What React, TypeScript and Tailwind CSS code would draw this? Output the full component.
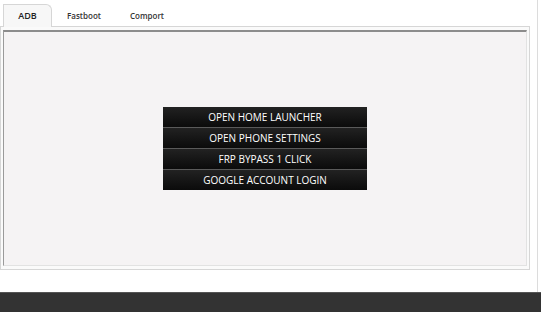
const actions = ["OPEN HOME LAUNCHER", "OPEN PHONE SETTINGS", "FRP BYPASS 1 CLICK", "GOOGLE ACCOUNT LOGIN"];

function ActionButton({ label }: { label: string }) {
  return (
    <button className="h-[20px] w-full bg-gradient-to-b from-[#222] to-[#0b0b0b] text-[10px] leading-[20px] text-white">
      {label}
    </button>
  );
}

export default function App() {
  return (
    <div className="w-[541px] h-[312px] bg-white flex flex-col overflow-hidden [font-family:'Open_Sans','Liberation_Sans',sans-serif]">
      <div className="h-[292px] flex">
        {/* Main tab control */}
        <div className="w-[530px] flex flex-col">
          {/* Tabs */}
          <div className="h-[26px] flex items-end pl-[3px] text-[8px] font-semibold text-[#333]">
            <div className="h-[23px] w-[49px] bg-[#f7f7f7] border border-b-0 border-[#d6d6d6] rounded-tr-[6px] flex items-center justify-center text-[9px] text-[#222] relative top-[1px]">
              ADB
            </div>
            <div className="h-[20px] w-[64px] flex items-center justify-center">Fastboot</div>
            <div className="h-[20px] w-[62px] flex items-center justify-center">Comport</div>
          </div>

          {/* Panel */}
          <div className="h-[244px] border border-[#d6d6d6] bg-[#fafafa] pl-[2px] pr-[2px] pt-[3px] pb-[3px] flex">
            <div className="flex-1 bg-[#f5f3f4] border-t-2 border-t-[#8c8c8c] border-l border-l-[#9a9a9a] border-r border-r-[#e2e2e2] border-b border-b-[#e2e2e2] flex items-center justify-center">
              <div className="w-[204px] flex flex-col gap-[1px] bg-[#5a5a5a] -mt-[1px]">
                {actions.map((a) => (
                  <ActionButton key={a} label={a} />
                ))}
              </div>
            </div>
          </div>
        </div>

        {/* Right strip */}
        <div className="flex-1 flex justify-end pr-[3px]">
          <div className="w-[1px] bg-[#dcdcdc]" />
        </div>
      </div>

      {/* Bottom bar */}
      <div className="flex-1 bg-[#333333] border-t border-t-[#555]" />
    </div>
  );
}
